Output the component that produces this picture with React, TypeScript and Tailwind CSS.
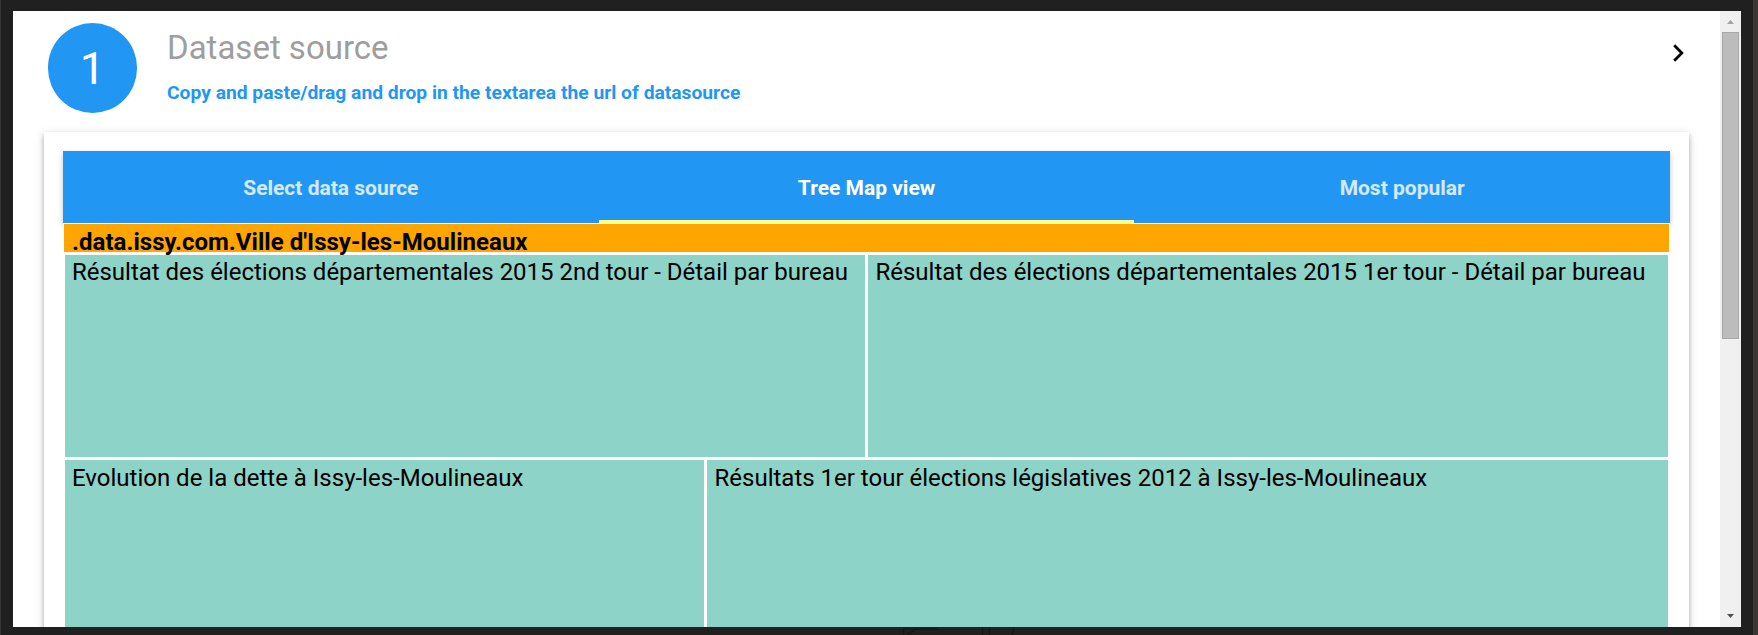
const tabs = [
  { label: "Select data source", active: false },
  { label: "Tree Map view", active: true },
  { label: "Most popular", active: false },
];

function Cell({ label, className }: { label: string; className: string }) {
  return (
    <div className={`bg-[#8dd3c7] text-[24px] leading-[28px] whitespace-nowrap ${className}`}>
      {label}
    </div>
  );
}

function Header() {
  return (
    <header className="flex h-[121px] shrink-0 pl-[35px] pt-[12px]">
      <div className="flex h-[90px] w-[89px] items-center justify-center rounded-full bg-[#2196f3] text-[45px] leading-none text-white">
        1
      </div>
      <div className="ml-[30px] flex-1">
        <h1 className="mt-[5px] text-[33px] leading-[40px] text-[#9e9e9e]">Dataset source</h1>
        <p className="mt-[13px] text-[19.25px] font-bold leading-[24px] text-[#2196f3]">
          Copy and paste/drag and drop in the textarea the url of datasource
        </p>
      </div>
      <svg className="mr-[35px] mt-[21px] h-[18px] w-[12px]" viewBox="0 0 12 18" fill="none">
        <path d="M1.2 1.3 8.8 9 1.2 16.7" stroke="#000" strokeWidth="2.8" />
      </svg>
    </header>
  );
}

function Scrollbar() {
  return (
    <div className="flex w-[21px] shrink-0 flex-col items-center bg-[#f0f0f0]">
      <div className="flex h-[21px] items-center pt-px">
        <svg className="h-1 w-[7px]" viewBox="0 0 7 4">
          <path d="M0 4 3.5 0 7 4z" fill="#a3a3a3" />
        </svg>
      </div>
      <div className="h-[307px] w-[17px] border border-[#a8a8a8] bg-[#bcbcbc]" />
      <div className="mt-auto flex h-[21px] items-center pb-px">
        <svg className="h-1 w-[7px]" viewBox="0 0 7 4">
          <path d="M0 0h7L3.5 4z" fill="#505050" />
        </svg>
      </div>
    </div>
  );
}

export default function App() {
  return (
    <div className="flex h-[635px] w-[1758px] overflow-hidden bg-[#202020] font-['Roboto',sans-serif] text-black">
      <div className="w-px bg-[#343434]" />
      <div className="flex flex-1 flex-col pl-3 pr-3 pt-[11px]">
        <div className="flex h-[616px] overflow-hidden bg-white">
          <main className="flex min-w-0 flex-1 flex-col">
            <Header />
            <section className="ml-[31px] h-[600px] w-[1645px] shrink-0 bg-white px-[19px] pt-[19px] shadow-[0_3px_5px_rgba(0,0,0,0.26),0_2px_10px_rgba(0,0,0,0.12)]">
              <nav className="grid h-[72px] w-[1607px] grid-cols-3 bg-[#2196f3] text-[21px] font-bold shadow-[0_3px_5px_rgba(0,0,0,0.16),0_2px_8px_rgba(0,0,0,0.08)]">
                {tabs.map((tab) => (
                  <div
                    key={tab.label}
                    className={`flex items-center justify-center border-b-[3px] pt-[6px] ${
                      tab.active ? "border-[#ffff8d] text-white" : "border-transparent text-white/80"
                    }`}
                  >
                    {tab.label}
                  </div>
                ))}
              </nav>
              <div className="relative bg-white px-px pt-px">
                <h2 className="relative mb-[3px] h-[28px] bg-[#ffa500] pl-2 pt-[4px] text-[24px] font-bold leading-[28px] tracking-[0.03px] whitespace-nowrap">
                  .data.issy.com.Ville d'Issy-les-Moulineaux
                </h2>
                <div className="flex flex-col gap-[3px] px-px">
                  <div className="flex h-[202px] gap-[3px]">
                    <Cell label="Résultat des élections départementales 2015 2nd tour - Détail par bureau" className="w-[800px] pl-[7px] pt-[3px] tracking-[-0.01px]" />
                    <Cell label="Résultat des élections départementales 2015 1er tour - Détail par bureau" className="w-[800px] pl-[7.5px] pt-[3px] tracking-[-0.01px]" />
                  </div>
                  <div className="flex h-[202px] gap-[3px]">
                    <Cell label="Evolution de la dette à Issy-les-Moulineaux" className="w-[639px] pl-[7px] pt-[4px]" />
                    <Cell label="Résultats 1er tour élections législatives 2012 à Issy-les-Moulineaux" className="w-[961px] pl-[7.5px] pt-[4px]" />
                  </div>
                </div>
              </div>
            </section>
          </main>
          <Scrollbar />
        </div>
        <svg className="ml-[889px] h-2 w-[120px]" viewBox="0 0 120 8" fill="none">
          <path d="M1.5 8V1.5h34M5 8l9-6h21M80.5 0v8M87.5 0v8M111.5 0v4l-2 4" stroke="#151817" strokeWidth="1.5" />
        </svg>
      </div>
      <div className="w-[5px] bg-[#3b3936]" />
    </div>
  );
}
